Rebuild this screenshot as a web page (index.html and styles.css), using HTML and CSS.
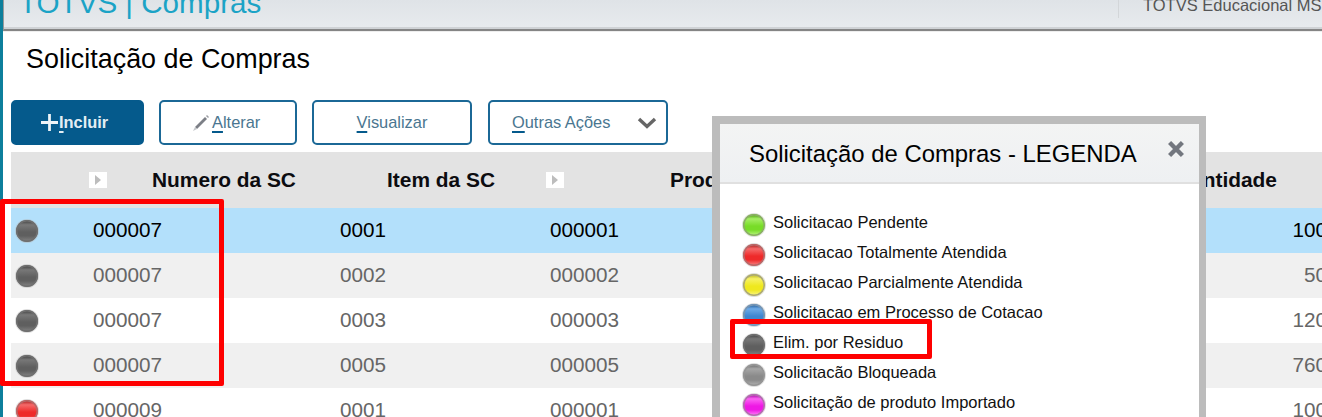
FILE: index.html
```html
<!DOCTYPE html>
<html lang="pt-BR">
<head>
<meta charset="utf-8">
<title>Solicitação de Compras</title>
<link rel="stylesheet" href="styles.css">
</head>
<body>
<div class="app">
  <header class="topbar">
    <div class="brand">TOTVS | Compras</div>
    <div class="env">TOTVS Educacional MSSQL</div>
  </header>
  <main class="page">
    <h1 class="page-title">Solicitação de Compras</h1>
    <div class="actions">
      <button class="btn btn-primary"><svg class="plus" viewBox="0 0 16 16"><path d="M8 0v16M0 8h16"/></svg><span><u>I</u>ncluir</span></button>
      <button class="btn btn-alterar"><svg class="pencil" viewBox="0 0 18 18"><path class="pencil-body" d="M3 13 13 3l2 2L5 15z"/><path class="pencil-tip" d="M14 2l1-1 2 2-1 1z"/><path class="pencil-point" d="M3 13l2 2-4 2z"/></svg><span><u>A</u>lterar</span></button>
      <button class="btn btn-visualizar"><span><u>V</u>isualizar</span></button>
      <button class="btn btn-outras"><span><u>O</u>utras Ações</span><svg class="chevron" viewBox="0 0 20 12"><path d="M2 2l8 7.5L18 2"/></svg></button>
    </div>
    <section class="grid">
      <div class="grid-head">
        <span></span>
        <span class="sort"><i></i></span>
        <span>Numero da SC</span>
        <span>Item da SC</span>
        <span class="sort"><i></i></span>
        <span>Produto</span>
        <span class="qty-head">Quantidade</span>
      </div>
      <div class="row selected"><span class="dot dark"></span><span>000007</span><span>0001</span><span>000001</span><span class="qty">100</span></div>
      <div class="row alt"><span class="dot dark"></span><span>000007</span><span>0002</span><span>000002</span><span class="qty">50</span></div>
      <div class="row"><span class="dot dark"></span><span>000007</span><span>0003</span><span>000003</span><span class="qty">120</span></div>
      <div class="row alt"><span class="dot dark"></span><span>000007</span><span>0005</span><span>000005</span><span class="qty">760</span></div>
      <div class="row"><span class="dot red"></span><span>000009</span><span>0001</span><span>000001</span><span class="qty">100</span></div>
    </section>
  </main>
</div>
<aside class="modal">
  <div class="modal-head">
    <h2 class="modal-title">Solicitação de Compras - LEGENDA</h2>
    <svg class="close" viewBox="0 0 14 14"><path d="M2 2l10 10M12 2 2 12"/></svg>
  </div>
  <ul class="legend">
    <li><span class="dot green"></span>Solicitacao Pendente</li>
    <li><span class="dot red"></span>Solicitacao Totalmente Atendida</li>
    <li><span class="dot yellow"></span>Solicitacao Parcialmente Atendida</li>
    <li><span class="dot blue"></span>Solicitacao em Processo de Cotacao</li>
    <li><span class="dot dark"></span>Elim. por Residuo</li>
    <li><span class="dot gray"></span>Solicitacão Bloqueada</li>
    <li><span class="dot magenta"></span>Solicitação de produto Importado</li>
  </ul>
</aside>
<div class="mark mark-grid"></div>
<div class="mark mark-legend"></div>
</body>
</html>
```
FILE: styles.css
```css
* { box-sizing: border-box; }
html, body { margin: 0; height: 100%; overflow: hidden; background: #fff; }
body { font-family: "Liberation Sans", Arial, sans-serif; color: #000; }

.app { height: 417px; border-left: 3px solid #0d7f9c; display: flex; flex-direction: column; overflow: hidden; }

.topbar {
  height: 31px; flex: none; display: flex; align-items: flex-end; justify-content: space-between;
  background: linear-gradient(#dfe3e7, #e8ebee);
  border-left: 1px solid #9a9a9a; border-bottom: 2px solid #858585;
  box-shadow: inset 0 -2px 0 #cfd2d5;
  overflow: hidden; position: relative;
}
.brand { font-size: 29.6px; line-height: 34px; color: #1ba3c6; margin: 0 0 9px 15px; white-space: nowrap; }
.env {
  width: 204px; height: 18px; align-self: flex-start; border-left: 1px solid #d3d6d9; padding-left: 24px;
  font-size: 16.5px; line-height: 11px; color: #555; white-space: nowrap; overflow: hidden;
}

.page { flex: 1; padding-left: 8px; border-top: 1px solid #eee; min-height: 0; }
.page-title { margin: 0 0 0 15px; padding-top: 11px; height: 68px; font-size: 26.9px; line-height: 32px; font-weight: 400; }

.actions { display: flex; height: 45px; margin-bottom: 7px; }
.btn {
  height: 45px; display: flex; align-items: center; padding: 0; border: 2px solid #1b6896; border-radius: 5px;
  background: #fff; color: #4a7690; font: 400 16.4px "Liberation Sans", Arial, sans-serif;
}
.btn u { text-decoration-thickness: 2px; text-underline-offset: 3px; text-decoration-color: #055a8c; }
.btn-primary { width: 133px; margin-right: 15px; background: #055a8c; border-color: #055a8c; color: #e4eef4; font-size: 16.4px; font-weight: 700; padding-left: 28px; }
.btn-primary u { text-decoration-color: #e4eef4; }
.plus { width: 17px; height: 17px; fill: none; stroke: #eef4f8; stroke-width: 2.6; margin-right: 1px; }
.btn-alterar { width: 138px; margin-right: 15px; padding-left: 31px; }
.pencil { width: 18px; height: 18px; margin-right: 2px; flex: none; }
.pencil-body { fill: #7c7f86; }
.pencil-tip { fill: #9a9ca2; }
.pencil-point { fill: #c4c6ca; }
.btn-visualizar { width: 160px; margin-right: 16px; justify-content: center; }
.btn-outras { width: 180px; padding-left: 22px; justify-content: space-between; padding-right: 9px; }
.chevron { width: 20px; height: 12px; fill: none; stroke: #666; stroke-width: 3.4; }

.grid { overflow: hidden; }
.grid-head {
  height: 56px; background: #e3e3e3; display: grid; align-items: center;
  grid-template-columns: 78px 63px 235px 159px 124px 1fr auto;
  font-size: 20.9px; font-weight: 700; color: #0c0c10; white-space: nowrap;
}
.qty-head { padding-right: 45px; }
.sort { width: 18px; height: 16px; background: #fff; display: flex; align-items: center; padding-left: 6px; }
.sort i { width: 0; height: 0; border: 5px solid transparent; border-left: 6px solid #bdbdbd; border-right: 0; }

.row {
  height: 45px; display: grid; align-items: center;
  grid-template-columns: 82px 247px 210px 1fr auto;
  font-size: 20.7px; line-height: 43px; color: #666; background: #fff; white-space: nowrap;
}
.row > span:not(.dot) { margin-bottom: 2px; }
.row .dot { margin-left: 5px; }
.row.alt { background: #f0f0f0; }
.row.selected { background: #b3e0fb; color: #000; }
.qty { margin-right: -5px; }

.dot {
  display: block; width: 22px; height: 22px; border-radius: 50%;
  background: linear-gradient(var(--low) 0 10%, var(--hi) 22%, var(--mid) 55%, var(--mid) 72%, var(--hi) 90%);
  box-shadow: inset 0 0 0 1.5px var(--rim), 0 0 0 1px rgba(180,180,180,.45);
}
.dark { --hi: #787878; --mid: #5f5f5f; --low: #565656; --rim: #6f6f6f; }
.red { --hi: #f56a6a; --mid: #ee2a2a; --low: #c43a3a; --rim: #b56a6a; }
.green { --hi: #a6ee66; --mid: #78dc28; --low: #6cbc2e; --rim: #8aac66; }
.yellow { --hi: #f6f265; --mid: #efe81e; --low: #cfcb3a; --rim: #a9a778; }
.blue { --hi: #6eaae6; --mid: #3f86d0; --low: #3d78b4; --rim: #7896b2; }
.gray { --hi: #a6a6a6; --mid: #8a8a8a; --low: #808080; --rim: #969696; }
.magenta { --hi: #fb63f3; --mid: #ee18e4; --low: #c428bf; --rim: #b070ad; }

.modal {
  position: absolute; left: 712px; top: 116px; width: 494px; height: 301px; overflow: hidden;
  background: #fff; border: solid #bcbcbc; border-width: 8px 7px 0 8px;
}
.modal-head {
  height: 60px; display: flex; align-items: center; justify-content: space-between;
  padding: 0 14px 0 29px; background: linear-gradient(#f3f4f4, #eef0f2); border-bottom: 2px solid #e0e0e0;
}
.modal-title { margin: 2px 0 0; font-size: 23.9px; font-weight: 400; line-height: 58px; white-space: nowrap; }
.close { width: 18px; height: 18px; margin-bottom: 8px; fill: none; stroke: #73777f; stroke-width: 3.4; }
.legend { list-style: none; margin: 0; padding: 25px 0 0 23px; }
.legend li { height: 30px; display: flex; align-items: center; gap: 8px; font-size: 16.5px; line-height: 30px; color: #111; white-space: nowrap; position: relative; top: -2px; }
.legend .dot { position: relative; top: 3px; }

.mark { position: absolute; border: 5px solid #fe0000; border-radius: 2px; }
.mark-grid { left: 0; top: 199px; width: 224px; height: 187px; }
.mark-legend { left: 730px; top: 319px; width: 202px; height: 40px; }
```
